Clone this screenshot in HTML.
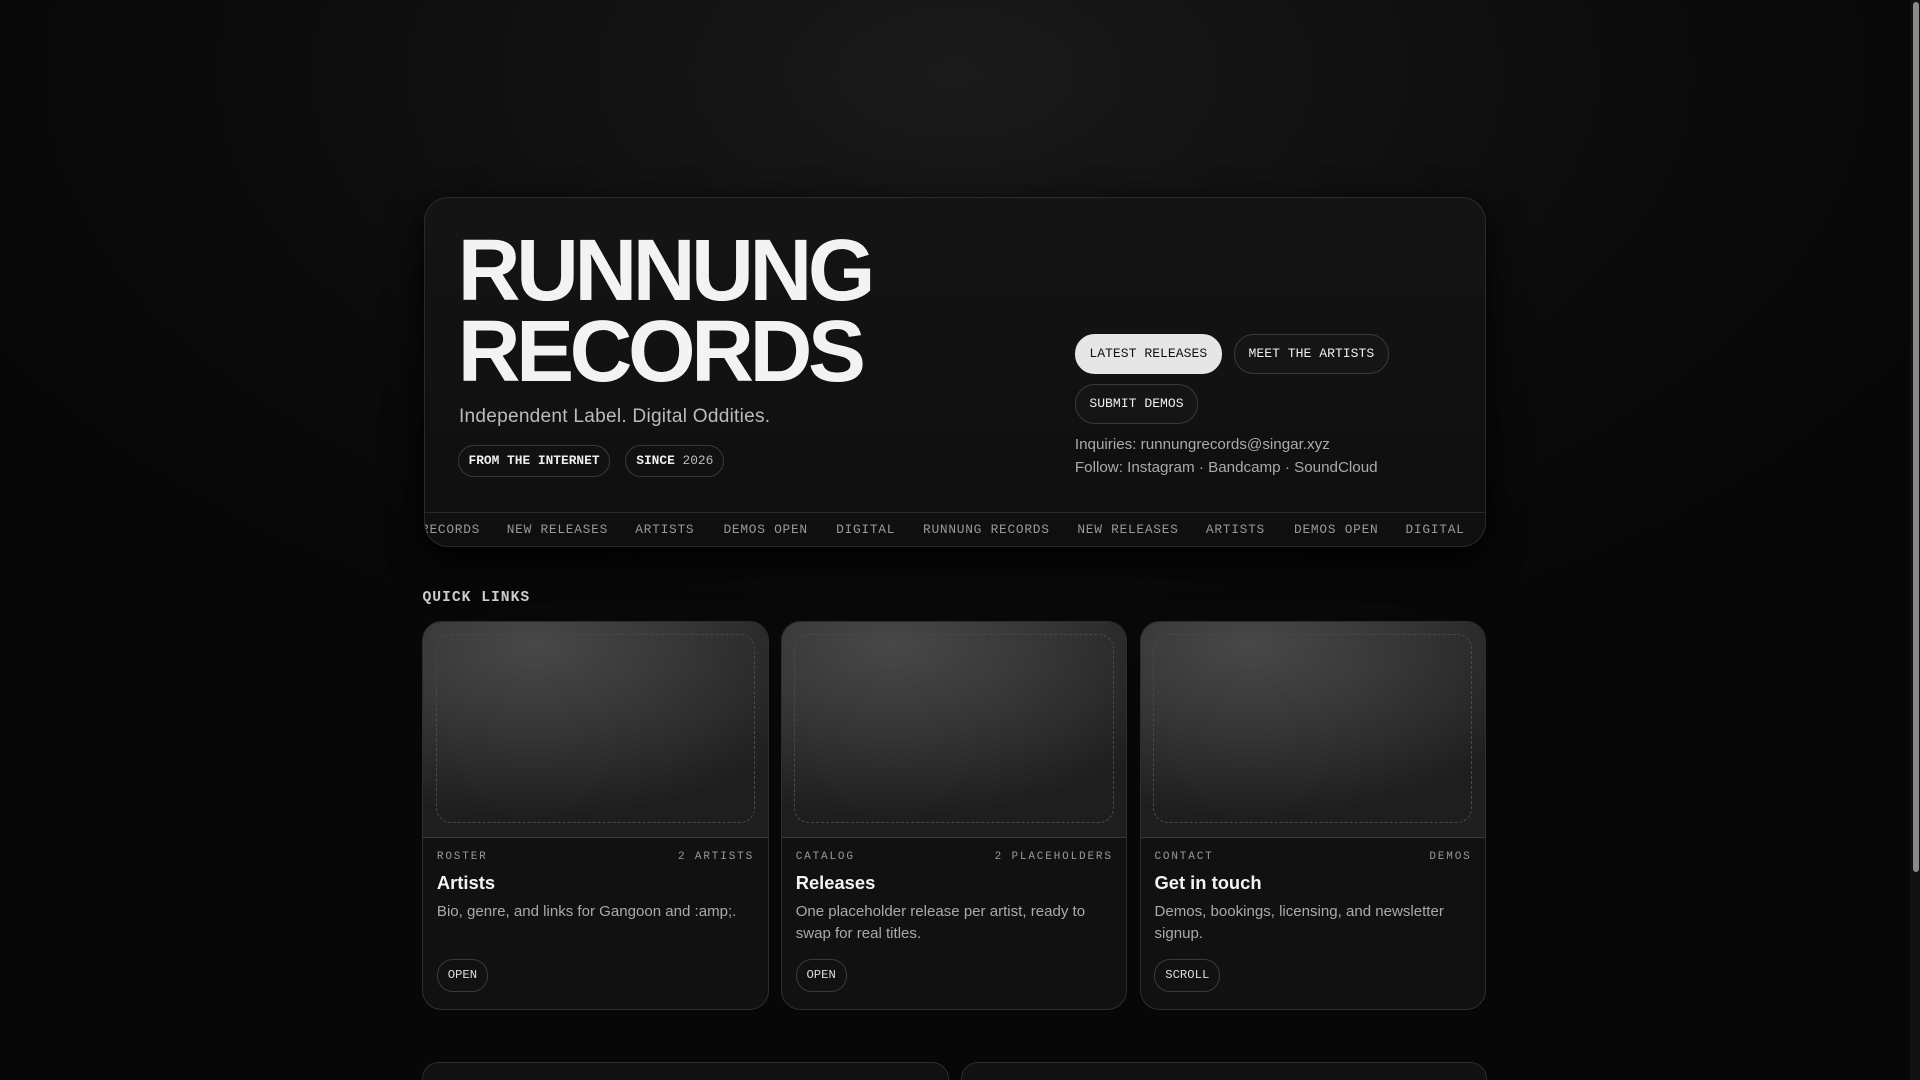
<!DOCTYPE html>
<html><head><meta charset="utf-8"><style>
html,body{margin:0;padding:0;background:#080808;overflow:hidden}
#z{zoom:1.22449;width:1568px;height:882px;position:relative;overflow:hidden;
background:radial-gradient(ellipse 900px 500px at 780px 60px,#1a1a1a,#0a0a0a 70%,#070707);font-family:"Liberation Sans",sans-serif;color:#eee}
.mono{font-family:"Liberation Mono",monospace}
.hero{position:absolute;left:346px;top:161px;width:866px;height:284px;border:1px solid #2a2a2a;border-radius:20px;background:linear-gradient(#141414,#0f0f0f);overflow:hidden;box-shadow:0 10px 30px #000}
h1{position:absolute;left:27px;top:27px;margin:0;font-size:71px;line-height:66px;font-weight:700;letter-spacing:-3.6px;color:#f3f3f3}
.sub{position:absolute;left:28px;top:170px;font-size:15.6px;color:#bbb;letter-spacing:.2px}
.tag{position:absolute;top:202px;height:24px;border:1px solid #3a3a3a;border-radius:13px;font-size:10.5px;font-weight:700;line-height:24px;padding:0 8px;color:#eee;background:#111}
.btn{position:absolute;height:31px;border:1px solid #3a3a3a;border-radius:16px;font-size:10.7px;line-height:31px;padding:0 11px;color:#eee;background:#151515}
.inq{position:absolute;left:531px;top:193px;font-size:12.4px;color:#aaa;line-height:18px}
.tick{position:absolute;left:0;right:0;top:256px;height:28px;border-top:1px solid #2a2a2a;font-size:10.5px;color:#999;line-height:28px;white-space:nowrap;letter-spacing:.6px}
.tick span{position:absolute}
.ql{position:absolute;left:345px;top:482px;font-size:12px;font-weight:700;color:#ccc;letter-spacing:.8px}
.card{position:absolute;top:507px;width:281px;height:316px;border:1px solid #2e2e2e;border-radius:16px;background:#111;overflow:hidden}
.img{height:176px;border-bottom:1px solid #3a3a3a;background:radial-gradient(ellipse 260px 140px at 90px 20px,#484848,#333 55%,#1e1e1e)}
.img div{position:absolute;left:10px;top:10px;width:259px;height:153px;border:1px dashed #4a4a4a;border-radius:12px}
.meta{position:absolute;top:187px;left:11px;right:11px;font-size:9px;color:#999;letter-spacing:1.5px}
.meta b{position:absolute;right:0;font-weight:400}
.t{position:absolute;left:11px;top:204px;font-size:15px;font-weight:700;color:#f3f3f3}
.d{position:absolute;left:11px;top:228px;right:20px;font-size:12.3px;line-height:18px;color:#aaa}
.o{position:absolute;left:11px;top:275px;height:26px;border:1px solid #3a3a3a;border-radius:13px;font-size:10px;line-height:26px;padding:0 8px;color:#ddd}
.bot{position:absolute;top:867px;height:40px;border:1px solid #2e2e2e;border-radius:14px;background:#111}
.sb{position:absolute;left:1560px;top:0;width:8px;height:882px;background:#111}
.sb div{position:absolute;left:2px;top:2px;width:5px;height:710px;border-radius:3px;background:#8a8a8a}
</style></head><body><div id="z">
<div class="hero">
<h1>RUNNUNG<br>RECORDS</h1>
<div class="sub">Independent Label. Digital Oddities.</div>
<div class="tag mono" style="left:27px">FROM THE INTERNET</div>
<div class="tag mono" style="left:164px">SINCE <span style="font-weight:400;color:#bbb">2026</span></div>
<div class="btn mono" style="left:531px;top:111px;background:#e6e6e6;color:#111;border-color:#e6e6e6">LATEST RELEASES</div>
<div class="btn mono" style="left:661px;top:111px">MEET THE ARTISTS</div>
<div class="btn mono" style="left:531px;top:152px">SUBMIT DEMOS</div>
<div class="inq">Inquiries: runnungrecords@singar.xyz<br>Follow: Instagram · Bandcamp · SoundCloud</div>
<div class="tick mono">
<span style="left:-3px">RECORDS</span><span style="left:67px">NEW RELEASES</span><span style="left:172px">ARTISTS</span><span style="left:244px">DEMOS OPEN</span><span style="left:336px">DIGITAL</span><span style="left:407px">RUNNUNG RECORDS</span><span style="left:533px">NEW RELEASES</span><span style="left:638px">ARTISTS</span><span style="left:710px">DEMOS OPEN</span><span style="left:801px">DIGITAL</span>
</div></div>
<div class="ql mono">QUICK LINKS</div>
<div class="card" style="left:345px"><div class="img"><div></div></div><div class="meta mono">ROSTER<b>2 ARTISTS</b></div><div class="t">Artists</div><div class="d">Bio, genre, and links for Gangoon and :amp;.</div><div class="o mono">OPEN</div></div>
<div class="card" style="left:638px"><div class="img"><div></div></div><div class="meta mono">CATALOG<b>2 PLACEHOLDERS</b></div><div class="t">Releases</div><div class="d">One placeholder release per artist, ready to swap for real titles.</div><div class="o mono">OPEN</div></div>
<div class="card" style="left:931px"><div class="img"><div></div></div><div class="meta mono">CONTACT<b>DEMOS</b></div><div class="t">Get in touch</div><div class="d">Demos, bookings, licensing, and newsletter signup.</div><div class="o mono">SCROLL</div></div>
<div class="bot" style="left:345px;width:428px"></div>
<div class="bot" style="left:785px;width:428px"></div>
<div class="sb"><div></div></div>
</div></body></html>
